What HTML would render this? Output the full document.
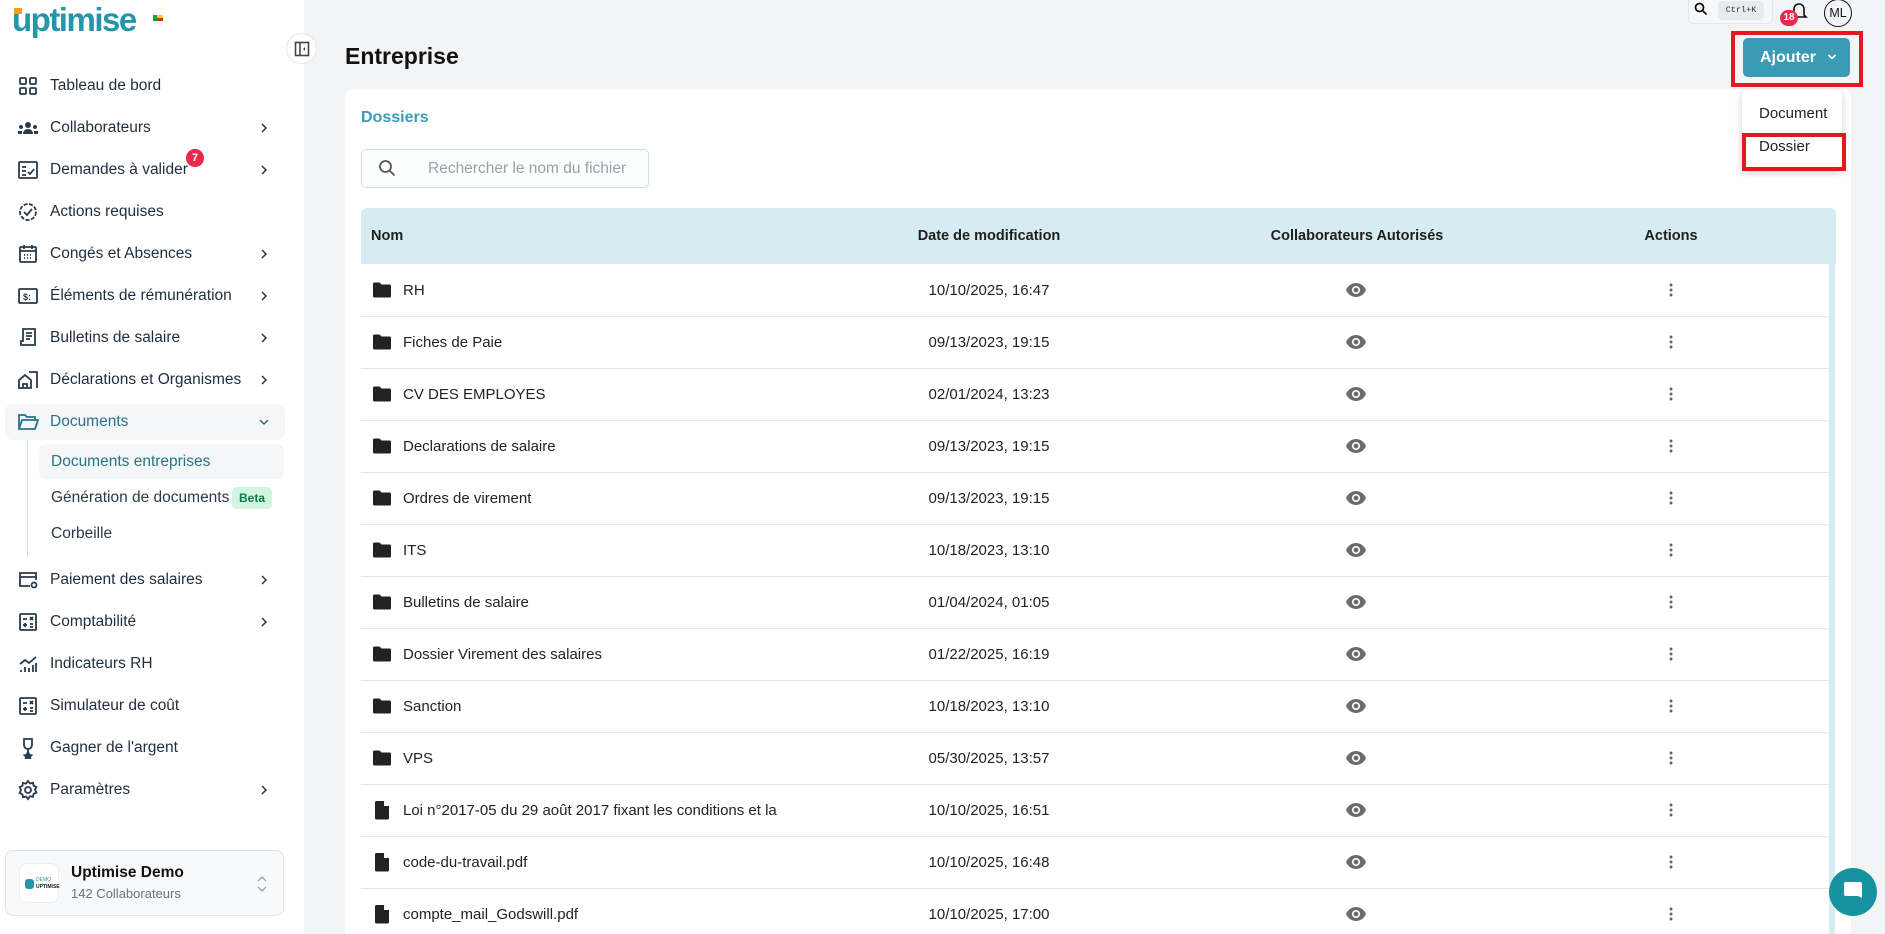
<!DOCTYPE html>
<html><head><meta charset="utf-8"><style>
*{box-sizing:border-box;margin:0;padding:0}
html,body{width:1885px;height:934px;overflow:hidden}
body{background:#f3f4f6;font-family:"Liberation Sans",sans-serif;color:#1f2937;position:relative}
.sb{position:absolute;left:0;top:0;width:304px;height:934px;background:#fff}
.abs{position:absolute}
.nav{position:absolute;left:0;width:304px;height:36px;display:flex;align-items:center;font-size:15.5px;color:#1f2d3d}
.nav svg.ic{position:absolute;left:17px;width:22px;height:22px}
.nav span{position:absolute;left:50px}
.chev{position:absolute;left:258px;width:12px;height:12px}
.row{position:absolute;left:361px;width:1468px;height:52px;border-bottom:1px solid #e3e5e8;font-size:15px;color:#222}
.row .n{position:absolute;left:42px;top:17px;white-space:nowrap;overflow:hidden;width:378px}
.row .d{position:absolute;left:528px;width:200px;text-align:center;top:17px}
.row .ico{position:absolute;left:11px;top:16px}
.row .eye{position:absolute;left:984px;top:17px}
.row .k{position:absolute;left:1307px;top:17px}
</style></head><body>
<div class="sb">
 <div class="abs" style="left:12px;top:1px;font-size:33px;font-weight:bold;color:#2596a9;letter-spacing:-1.5px;line-height:38px">uptimise</div>
 <div class="abs" style="left:14px;top:8px;width:8px;height:6px;background:#f2a11f"></div>
 <div class="abs" style="left:153px;top:15px;width:4px;height:6px;background:#1b9d48"></div>
 <div class="abs" style="left:157px;top:15px;width:6px;height:3px;background:#f6d21a"></div>
 <div class="abs" style="left:157px;top:18px;width:6px;height:3px;background:#e3252d"></div>
</div>
<div class="abs" style="left:286px;top:33px;width:31px;height:31px;border-radius:50%;background:#fff;border:1px solid #e2e5e9"><svg width="16" height="16" viewBox="0 0 16 16" style="position:absolute;left:7px;top:7px"><rect x="1.5" y="1.5" width="13" height="13" fill="none" stroke="#444" stroke-width="1.6"/><line x1="6" y1="1.5" x2="6" y2="14.5" stroke="#444" stroke-width="1.6"/><path d="M11 6 L9 8 L11 10" fill="#444"/></svg></div>

<div class="nav" style="top:68px"><svg class="ic" viewBox="0 0 22 22" fill="none" stroke="#2a3a4a" stroke-width="1.8"><rect x="3" y="3" width="6" height="6" rx="1"/><rect x="13" y="3" width="6" height="6" rx="1"/><rect x="3" y="13" width="6" height="6" rx="1"/><rect x="13" y="13" width="6" height="6" rx="1"/></svg><span>Tableau de bord</span></div>
<div class="nav" style="top:110px"><svg class="ic" viewBox="0 0 22 22" fill="#2a3a4a"><circle cx="11" cy="8" r="3"/><path d="M6 17c0-3 2-5 5-5s5 2 5 5z"/><circle cx="4" cy="10" r="2"/><circle cx="18" cy="10" r="2"/><rect x="1" y="14" width="4" height="3"/><rect x="17" y="14" width="4" height="3"/></svg><span>Collaborateurs</span><svg class="chev" viewBox="0 0 12 12"><path d="M4 2l4 4-4 4" fill="none" stroke="#333" stroke-width="1.5"/></svg></div>
<div class="nav" style="top:152px"><svg class="ic" viewBox="0 0 22 22" fill="none" stroke="#2a3a4a" stroke-width="1.8"><rect x="2" y="3" width="18" height="16" rx="1"/><path d="M5 8h4M5 12h4M5 16h4M11 13l2 2 4-5"/></svg><span>Demandes à valider</span><div class="abs" style="left:186px;top:-3px;width:18px;height:18px;border-radius:50%;background:#e8294c;color:#fff;font-size:11px;font-weight:bold;text-align:center;line-height:18px">7</div><svg class="chev" viewBox="0 0 12 12"><path d="M4 2l4 4-4 4" fill="none" stroke="#333" stroke-width="1.5"/></svg></div>
<div class="nav" style="top:194px"><svg class="ic" viewBox="0 0 22 22" fill="none" stroke="#2a3a4a" stroke-width="1.8"><circle cx="11" cy="11" r="8" stroke-dasharray="4 1.5"/><path d="M7 11l3 3 5-6"/></svg><span>Actions requises</span></div>
<div class="nav" style="top:236px"><svg class="ic" viewBox="0 0 22 22" fill="none" stroke="#2a3a4a" stroke-width="1.8"><rect x="3" y="4" width="16" height="15" rx="1"/><path d="M3 8h16M7 2v4M15 2v4"/><path d="M7 12h1M10 12h1M13 12h1M7 15h1M10 15h1M13 15h1"/></svg><span>Congés et Absences</span><svg class="chev" viewBox="0 0 12 12"><path d="M4 2l4 4-4 4" fill="none" stroke="#333" stroke-width="1.5"/></svg></div>
<div class="nav" style="top:278px"><svg class="ic" viewBox="0 0 22 22" fill="none" stroke="#2a3a4a" stroke-width="1.8"><rect x="2" y="4" width="18" height="14" rx="1"/><text x="6" y="15" font-size="9" fill="#2a3a4a" stroke="none" font-weight="bold">$:</text></svg><span>Éléments de rémunération</span><svg class="chev" viewBox="0 0 12 12"><path d="M4 2l4 4-4 4" fill="none" stroke="#333" stroke-width="1.5"/></svg></div>
<div class="nav" style="top:320px"><svg class="ic" viewBox="0 0 22 22" fill="none" stroke="#2a3a4a" stroke-width="1.8"><path d="M6 2h12v16H4v-4h2z"/><path d="M9 6h6M9 9h6M9 12h4"/></svg><span>Bulletins de salaire</span><svg class="chev" viewBox="0 0 12 12"><path d="M4 2l4 4-4 4" fill="none" stroke="#333" stroke-width="1.5"/></svg></div>
<div class="nav" style="top:362px"><svg class="ic" viewBox="0 0 22 22" fill="none" stroke="#2a3a4a" stroke-width="1.8"><path d="M2 19v-8l6-5 6 5v8zM6 19v-4h4v4M12 3h8v16"/></svg><span>Déclarations et Organismes</span><svg class="chev" viewBox="0 0 12 12"><path d="M4 2l4 4-4 4" fill="none" stroke="#333" stroke-width="1.5"/></svg></div>
<div class="abs" style="left:5px;top:404px;width:280px;height:36px;background:#f4f6f8;border-radius:8px"></div>
<div class="nav" style="top:404px;color:#2a7386"><svg class="ic" viewBox="0 0 22 22" fill="none" stroke="#2a7386" stroke-width="1.8"><path d="M2 18V4h6l2 2h8v3M2 18l3-9h16l-3 9z"/></svg><span>Documents</span><svg class="chev" viewBox="0 0 12 12"><path d="M2 4l4 4 4-4" fill="none" stroke="#2a7386" stroke-width="1.5"/></svg></div>
<div class="abs" style="left:27px;top:440px;width:1px;height:116px;background:#cfdde3"></div>
<div class="abs" style="left:39px;top:444px;width:245px;height:35px;background:#f4f6f8;border-radius:7px"></div>
<div class="abs" style="left:51px;top:453px;font-size:15.5px;color:#2a7386">Documents entreprises</div>
<div class="abs" style="left:51px;top:489px;font-size:15.5px;color:#2a3a4a">Génération de documents</div>
<div class="abs" style="left:232px;top:487px;width:40px;height:22px;background:#d1f5e1;border-radius:5px;color:#0e7a45;font-size:12px;font-weight:bold;text-align:center;line-height:22px">Beta</div>
<div class="abs" style="left:51px;top:525px;font-size:15.5px;color:#2a3a4a">Corbeille</div>
<div class="nav" style="top:562px"><svg class="ic" viewBox="0 0 22 22" fill="none" stroke="#2a3a4a" stroke-width="1.8"><path d="M13 17H3V4h16v7M3 8h16"/><circle cx="17" cy="16" r="2.5"/></svg><span>Paiement des salaires</span><svg class="chev" viewBox="0 0 12 12"><path d="M4 2l4 4-4 4" fill="none" stroke="#333" stroke-width="1.5"/></svg></div>
<div class="nav" style="top:604px"><svg class="ic" viewBox="0 0 22 22" fill="none" stroke="#2a3a4a" stroke-width="1.8"><rect x="3" y="3" width="16" height="16" rx="1"/><path d="M6 8h4M13 6l3 3M16 6l-3 3M6 14h4M8 12v4M13 13h3M13 16h3"/></svg><span>Comptabilité</span><svg class="chev" viewBox="0 0 12 12"><path d="M4 2l4 4-4 4" fill="none" stroke="#333" stroke-width="1.5"/></svg></div>
<div class="nav" style="top:646px"><svg class="ic" viewBox="0 0 22 22" fill="none" stroke="#2a3a4a" stroke-width="1.8"><path d="M3 11l5-4 4 3 7-6M4 19v-2M8 19v-5M12 19v-4M16 19v-7M19 19v-9"/></svg><span>Indicateurs RH</span></div>
<div class="nav" style="top:688px"><svg class="ic" viewBox="0 0 22 22" fill="none" stroke="#2a3a4a" stroke-width="1.8"><rect x="3" y="3" width="16" height="16" rx="1"/><path d="M6 8h4M13 6l3 3M16 6l-3 3M6 14h4M8 12v4M13 13h3M13 16h3"/></svg><span>Simulateur de coût</span></div>
<div class="nav" style="top:730px"><svg class="ic" viewBox="0 0 22 22" fill="none" stroke="#2a3a4a" stroke-width="1.8"><path d="M7 2h8v6a4 4 0 0 1-8 0zM11 12v3"/><path d="M11 15l1.5 3 2 .3-1.5 1.5.4 2-2.4-1.2-2.4 1.2.4-2-1.5-1.5 2-.3z" fill="#2a3a4a"/></svg><span>Gagner de l'argent</span></div>
<div class="nav" style="top:772px"><svg class="ic" viewBox="0 0 22 22" fill="none" stroke="#2a3a4a" stroke-width="1.8"><circle cx="11" cy="11" r="3"/><path d="M11 2l2 2.5 3-.8.6 3 2.8 1.3-1.4 2.8 1.4 2.8-2.8 1.3-.6 3-3-.8L11 20l-2-2.5-3 .8-.6-3L2.6 14 4 11 2.6 8.2l2.8-1.3.6-3 3 .8z"/></svg><span>Paramètres</span><svg class="chev" viewBox="0 0 12 12"><path d="M4 2l4 4-4 4" fill="none" stroke="#333" stroke-width="1.5"/></svg></div>

<div class="abs" style="left:5px;top:850px;width:279px;height:66px;background:#f8f9fb;border:1px solid #e0e3e7;border-radius:8px">
 <div class="abs" style="left:13px;top:12px;width:40px;height:40px;background:#fff;border-radius:8px;border:1px solid #eee"><div class="abs" style="left:5px;top:15px;width:9px;height:10px;border-radius:3px;background:#2596a9"></div><div class="abs" style="left:16px;top:13px;font-size:5px;color:#2596a9">DEMO</div><div class="abs" style="left:16px;top:20px;font-size:5px;font-weight:bold;color:#222">UPTIMISE</div></div>
 <div class="abs" style="left:65px;top:13px;font-size:15.5px;font-weight:bold;color:#111">Uptimise Demo</div>
 <div class="abs" style="left:65px;top:35px;font-size:13px;color:#6b7280">142 Collaborateurs</div>
 <svg class="abs" style="left:250px;top:22px" width="12" height="22" viewBox="0 0 12 22"><path d="M2 8l4-4 4 4M2 14l4 4 4-4" fill="none" stroke="#9aa3ad" stroke-width="1.4"/></svg>
</div>

<div class="abs" style="left:1688px;top:-6px;width:85px;height:30px;background:#f7f8fa;border:1px solid #e3e6ea;border-radius:6px"></div>
<svg class="abs" style="left:1694px;top:2px" width="14" height="14" viewBox="0 0 14 14"><circle cx="5.5" cy="5.5" r="4" fill="none" stroke="#111" stroke-width="1.8"/><path d="M8.5 8.5l4 4" stroke="#111" stroke-width="1.8"/></svg>
<div class="abs" style="left:1718px;top:1px;width:46px;height:19px;background:#e8eaed;border-radius:4px;font-family:'Liberation Mono',monospace;font-size:8.5px;text-align:center;line-height:19px;color:#333">Ctrl+K</div>
<svg class="abs" style="left:1790px;top:1px" width="18" height="20" viewBox="0 0 18 20"><path d="M4 14V8a5 5 0 0 1 10 0v6l2 2H2z" fill="none" stroke="#111" stroke-width="1.6"/></svg>
<div class="abs" style="left:1780px;top:10px;width:18px;height:16px;border-radius:8px;background:#e8294c;color:#fff;font-size:10px;font-weight:bold;text-align:center;line-height:16px">18</div>
<div class="abs" style="left:1824px;top:-1px;width:28px;height:28px;border-radius:50%;border:1.3px solid #111;font-size:12.5px;text-align:center;line-height:26px;color:#111">ML</div>

<div class="abs" style="left:345px;top:43px;font-size:23px;font-weight:bold;color:#111">Entreprise</div>

<div class="abs" style="left:1743px;top:38px;width:107px;height:39px;background:#3a9bb5;border-radius:5px;color:#fff;font-size:16px;font-weight:bold;line-height:39px;padding-left:17px">Ajouter<svg style="position:absolute;left:84px;top:15px" width="10" height="8" viewBox="0 0 10 8"><path d="M1.5 2l3.5 3.5L8.5 2" fill="none" stroke="#fff" stroke-width="1.6"/></svg></div>
<div class="abs" style="left:1731px;top:31px;width:132px;height:56px;border:4px solid #e4191f"></div>

<div class="abs" style="left:345px;top:89px;width:1506px;height:845px;background:#fff;border-radius:8px 8px 0 0"></div>
<div class="abs" style="left:361px;top:109px;font-size:16px;font-weight:bold;color:#3a9bb5">Dossiers</div>
<div class="abs" style="left:361px;top:149px;width:288px;height:39px;border:1px solid #cfe0e6;border-radius:5px;background:#fdfefe"></div>
<svg class="abs" style="left:378px;top:159px" width="18" height="18" viewBox="0 0 18 18"><circle cx="7.5" cy="7.5" r="5.5" fill="none" stroke="#555" stroke-width="1.8"/><path d="M11.5 11.5l5 5" stroke="#555" stroke-width="1.8"/></svg>
<div class="abs" style="left:428px;top:160px;font-size:15.5px;color:#9aa0a6">Rechercher le nom du fichier</div>

<div class="abs" style="left:361px;top:208px;width:1475px;height:56px;background:#d7ebf2;border-radius:6px 6px 0 0;font-size:14.5px;font-weight:bold;color:#1e1e1e">
 <div class="abs" style="left:10px;top:20px">Nom</div>
 <div class="abs" style="left:528px;width:200px;text-align:center;top:20px">Date de modification</div>
 <div class="abs" style="left:896px;width:200px;text-align:center;top:20px">Collaborateurs Autorisés</div>
 <div class="abs" style="left:1210px;width:200px;text-align:center;top:20px">Actions</div>
</div>
<div class="abs" style="left:1829px;top:264px;width:6px;height:670px;background:#d7ebf2"></div>

<div id="rows"></div>
<script>
const data=[["RH","10/10/2025, 16:47",1],["Fiches de Paie","09/13/2023, 19:15",1],["CV DES EMPLOYES","02/01/2024, 13:23",1],["Declarations de salaire","09/13/2023, 19:15",1],["Ordres de virement","09/13/2023, 19:15",1],["ITS","10/18/2023, 13:10",1],["Bulletins de salaire","01/04/2024, 01:05",1],["Dossier Virement des salaires","01/22/2025, 16:19",1],["Sanction","10/18/2023, 13:10",1],["VPS","05/30/2025, 13:57",1],["Loi n°2017-05 du 29 août 2017 fixant les conditions et la procédure","10/10/2025, 16:51",0],["code-du-travail.pdf","10/10/2025, 16:48",0],["compte_mail_Godswill.pdf","10/10/2025, 17:00",0]];
let h="";
const fold='<svg class="ico" width="20" height="18" viewBox="0 0 20 18"><path d="M1 3a1.5 1.5 0 0 1 1.5-1.5h5l2 2h8A1.5 1.5 0 0 1 19 5v10a1.5 1.5 0 0 1-1.5 1.5h-15A1.5 1.5 0 0 1 1 15z" fill="#222"/></svg>';
const file='<svg class="ico" width="20" height="20" viewBox="0 0 20 20" style="top:15px"><path d="M4 1h8l5 5v12a1.5 1.5 0 0 1-1.5 1.5h-11A1.5 1.5 0 0 1 3 18V2.5A1.5 1.5 0 0 1 4 1z" fill="#222"/><path d="M12 1l5 5h-5z" fill="#fff"/></svg>';
const eye='<svg class="eye" width="22" height="16" viewBox="0 0 22 16"><path d="M11 1C6 1 2.5 4.5 1 8c1.5 3.5 5 7 10 7s8.5-3.5 10-7C19.5 4.5 16 1 11 1z" fill="#6b6b6b"/><circle cx="11" cy="8" r="4" fill="#fff"/><circle cx="11" cy="8" r="2.4" fill="#6b6b6b"/></svg>';
const keb='<svg class="k" width="6" height="16" viewBox="0 0 6 16"><circle cx="3" cy="3" r="1.5" fill="#666"/><circle cx="3" cy="8" r="1.5" fill="#666"/><circle cx="3" cy="13" r="1.5" fill="#666"/></svg>';
data.forEach((r,i)=>{h+=`<div class="row" style="top:${265+52*i}px">${r[2]?fold:file}<div class="n">${r[0]}</div><div class="d">${r[1]}</div>${eye}${keb}</div>`;});
document.getElementById('rows').innerHTML=h;
</script>

<div class="abs" style="left:1742px;top:90px;width:100px;height:81px;background:#fff;border-radius:5px;box-shadow:0 2px 8px rgba(0,0,0,0.2)">
 <div class="abs" style="left:17px;top:15px;font-size:15px;color:#222">Document</div>
 <div class="abs" style="left:17px;top:48px;font-size:15px;color:#222">Dossier</div>
</div>
<div class="abs" style="left:1742px;top:133px;width:104px;height:38px;border:4px solid #e4191f"></div>

<div class="abs" style="left:1829px;top:868px;width:48px;height:48px;border-radius:50%;background:#17939f"></div>
<svg class="abs" style="left:1843px;top:881px" width="20" height="22" viewBox="0 0 20 22"><path d="M3 1h14a2 2 0 0 1 2 2v14l-4-2H3a2 2 0 0 1-2-2V3a2 2 0 0 1 2-2z" fill="#fff"/></svg>
</body></html>
